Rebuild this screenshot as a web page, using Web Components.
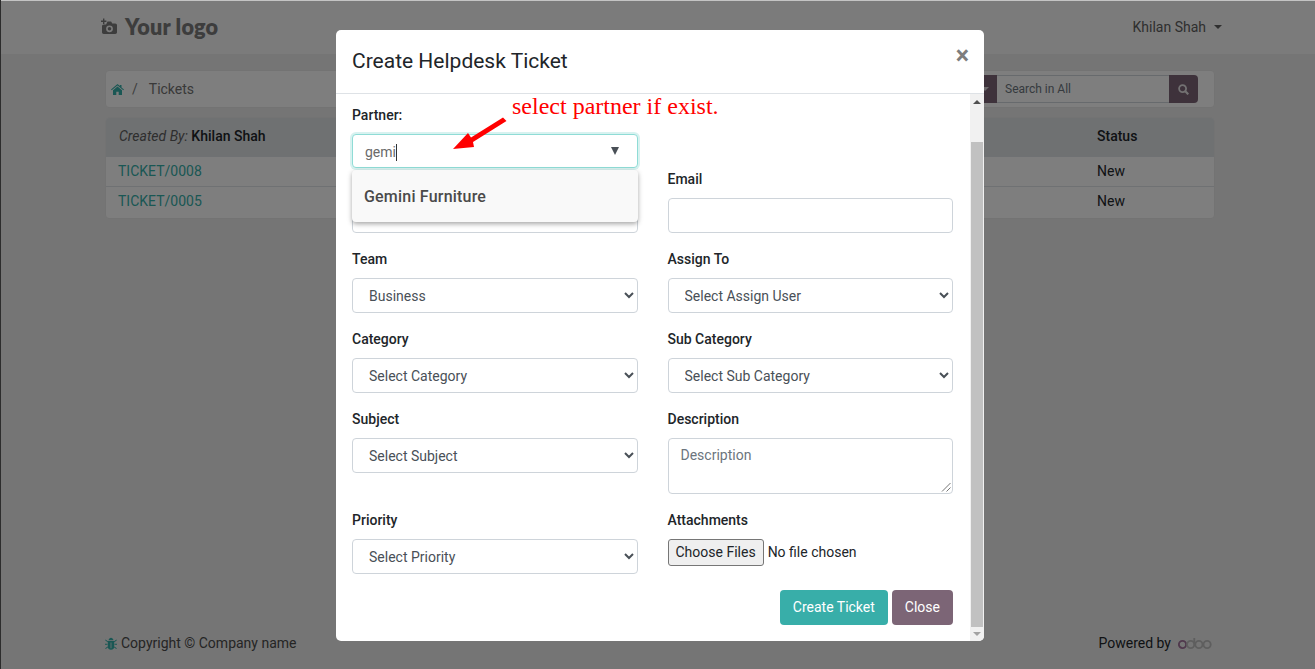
<!DOCTYPE html>
<html>
<head>
<meta charset="utf-8">
<title>Create Helpdesk Ticket</title>
<style>
  html, body { margin: 0; height: 100%; overflow: hidden; }
  body { font: 14px/21px Roboto, "Liberation Sans", sans-serif; color: #212529; background: #ebebeb; }
</style>
</head>
<body>
<portal-page>
  <portal-nav slot="nav">Khilan Shah</portal-nav>
  <portal-crumbs slot="main"></portal-crumbs>
  <ticket-table slot="main"></ticket-table>
  <portal-footer slot="footer"></portal-footer>
  <ticket-modal slot="modal" heading="Create Helpdesk Ticket">
    <form-field>
      <span slot="label">Partner:</span>
      <partner-select value="gemi"></partner-select>
    </form-field>
    <form-field></form-field>
    <form-field empty><form-input></form-input></form-field>
    <form-field>
      <span slot="label">Email</span>
      <form-input></form-input>
    </form-field>
    <form-field>
      <span slot="label">Team</span>
      <form-select text="Business"></form-select>
    </form-field>
    <form-field>
      <span slot="label">Assign To</span>
      <form-select text="Select Assign User"></form-select>
    </form-field>
    <form-field>
      <span slot="label">Category</span>
      <form-select text="Select Category"></form-select>
    </form-field>
    <form-field>
      <span slot="label">Sub Category</span>
      <form-select text="Select Sub Category"></form-select>
    </form-field>
    <form-field>
      <span slot="label">Subject</span>
      <form-select text="Select Subject"></form-select>
    </form-field>
    <form-field>
      <span slot="label">Description</span>
      <form-input multiline placeholder="Description"></form-input>
    </form-field>
    <form-field>
      <span slot="label">Priority</span>
      <form-select text="Select Priority"></form-select>
    </form-field>
    <form-field>
      <span slot="label">Attachments</span>
      <file-picker></file-picker>
    </form-field>
  </ticket-modal>
</portal-page>

<script>
const CAMERA_ICON = `<svg width="18" height="18" viewBox="0 0 18 18" fill="#7a7a7a">
  <path d="M1 2.500h2V.5h1.400v2h2v1.400h-2v2H3v-2H1z"/>
  <path fill-rule="evenodd" d="M7.500 3.500h3.600l1.200 2h3c.9 0 1.700.8 1.700 1.700v7.100c0 .9-.8 1.700-1.700 1.700H3.700c-.9 0-1.700-.8-1.700-1.700V8.200c0-.9.8-1.700 1.700-1.700h2.400zM9.500 7.400a3.400 3.400 0 1 0 0 6.800 3.400 3.400 0 0 0 0-6.800zm0 1.600a1.800 1.800 0 1 1 0 3.600 1.800 1.800 0 0 1 0-3.600z"/>
</svg>`;
const HOME_ICON = `<svg width="13" height="11" viewBox="0 0 13 11" fill="#35aea8">
  <path d="M6.500 0 8.900 2V.9h1.600v2.500L13 5.500l-.7.8-5.800-4.800L.7 6.300 0 5.500z"/>
  <path d="M6.500 2.600 11 6.300V11H7.700V7.700H5.300V11H2V6.300z"/>
</svg>`;
const SEARCH_ICON = `<svg width="11" height="11" viewBox="0 0 11 11" fill="none" stroke="#e6e3e5" stroke-width="1.800">
  <circle cx="4.600" cy="4.600" r="3.500"/><path d="m7.300 7.300 3 3" stroke-width="2.200"/>
</svg>`;
const BUG_ICON = `<svg width="12" height="13" viewBox="0 0 12 13" fill="#35aea8">
  <path d="M3.500 3.300C3.800 1.700 4.800.8 6 .8s2.200.9 2.500 2.500z"/>
  <path fill-rule="evenodd" d="M2.800 4h6.400v6c0 1.600-1.300 2.700-3.200 2.700S2.800 11.600 2.800 10zm2.800 1.500v5.800h.8V5.500z"/>
  <path d="M0 6.800h2.500v1H0zM9.500 6.800H12v1H9.500zM.6 2.600l2.500 2-.5.6-2.500-2zM11.400 2.600l-2.500 2 .5.6 2.500-2zM.2 11.200l2.400-1.700.5.700-2.400 1.700zM11.800 11.200 9.400 9.500l-.5.700 2.400 1.700z"/>
</svg>`;
const ODOO_LOGO = `<svg width="34" height="13" viewBox="0 0 34 13" fill="none" stroke="#bdbdbd" stroke-width="1.900">
  <circle cx="4.500" cy="7.500" r="3.600" stroke="#a0729a"/>
  <circle cx="12.700" cy="7.500" r="3.600"/><path d="M16.300 7.500V1"/>
  <circle cx="20.900" cy="7.500" r="3.600"/><circle cx="29.100" cy="7.500" r="3.600"/>
</svg>`;

class BaseElement extends HTMLElement {
  constructor() {
    super();
    this.attachShadow({ mode: "open" });
  }

  connectedCallback() {
    this.shadowRoot.innerHTML = this.render();
  }
}

class PortalPage extends BaseElement {
  render() {
    return /* html */`
    <style>
      :host { display: block; position: relative; height: 669px; overflow: hidden; }
      .page { display: flex; flex-direction: column; height: 100%; }
      main { flex: 1; display: flex; flex-direction: column; gap: 9px; padding: 16px 100px 0 105px; }
      .backdrop { position: absolute; inset: 0; background: rgba(0, 0, 0, .5); }
      .edge-top { position: absolute; left: 0; right: 0; top: 0; height: 1px; background: #c4c4c4; }
      .edge-left { position: absolute; left: 0; top: 0; bottom: 0; width: 1px; background: #2c2c2c; }
    </style>
    <div class="page">
      <slot name="nav"></slot>
      <main><slot name="main"></slot></main>
      <slot name="footer"></slot>
    </div>
    <div class="backdrop"></div>
    <div class="edge-top"></div>
    <div class="edge-left"></div>
    <slot name="modal"></slot>
    `;
  }
}

class PortalNav extends BaseElement {
  render() {
    return /* html */`
    <style>
      :host { display: flex; align-items: center; justify-content: space-between; height: 54px; padding: 0 93px 0 100px; background: #f6f6f6; flex: none; }
      .logo { display: flex; align-items: center; gap: 7px; font: 800 21.6px/28px Lato, sans-serif; color: #7a7a7a; letter-spacing: .2px; margin-top: -1px; }
      .user { color: #5e5e5e; }
      .user::after { content: ""; display: inline-block; margin-left: 8px; vertical-align: 3px; border-top: 4px solid #5e5e5e; border-left: 4px solid transparent; border-right: 4px solid transparent; }
    </style>
    <div class="logo">${CAMERA_ICON}<span>Your logo</span></div>
    <div class="user"><slot></slot></div>
    `;
  }
}

class PortalCrumbs extends BaseElement {
  render() {
    return /* html */`
    <style>
      :host { display: flex; align-items: center; justify-content: space-between; height: 38px; box-sizing: border-box; padding: 0 16px 0 5px; background: #fdfdfd; border: 1px solid #e6e6e6; border-radius: 4px; }
      .trail { display: flex; align-items: center; color: #7d7d7d; }
      .trail span { margin: 0 11px 0 8px; }
      .current { color: #727272; }
      .search { display: flex; height: 28px; font-size: 12px; }
      .filter { position: relative; width: 30px; background: #7c6576; border-radius: 4px 0 0 4px; }
      .filter::after { content: ""; position: absolute; right: 8px; top: 12px; border-top: 4px solid #dcd6da; border-left: 4px solid transparent; border-right: 4px solid transparent; }
      .input { width: 164px; padding-left: 8px; border: 1px solid #ced4da; border-width: 1px 0; color: #6c757d; line-height: 26px; background: #fdfdfd; }
      .go { display: flex; align-items: center; justify-content: center; width: 29px; background: #7c6576; border-radius: 0 4px 4px 0; }
    </style>
    <div class="trail">${HOME_ICON}<span>/</span><div class="current">Tickets</div></div>
    <div class="search">
      <div class="filter"></div>
      <div class="input">Search in All</div>
      <div class="go">${SEARCH_ICON}</div>
    </div>
    `;
  }
}

class TicketTable extends BaseElement {
  render() {
    const rows = ["TICKET/0008", "TICKET/0005"].map((name) => /* html */`
      <div class="row"><a>${name}</a><span>New</span></div>
    `).join("");
    return /* html */`
    <style>
      :host { display: block; padding-bottom: 2px; background: #fdfdfd; border: 1px solid #e6e6e6; border-radius: 4px; overflow: hidden; }
      .row { display: grid; grid-template-columns: 979px 1fr; align-items: center; height: 29px; padding-left: 12px; border-top: 1px solid #dee2e6; }
      .head { display: grid; grid-template-columns: 978px 1fr; align-items: center; height: 36px; padding: 0 0 2px 13px; background: #dfe2e5; font-weight: 500; color: #212529; }
      em { color: #5c5c5c; font-weight: 400; }
      a { color: #35aea8; }
      span { color: #212529; }
    </style>
    <div class="head"><div><em>Created By:</em> Khilan Shah</div><div>Status</div></div>
    ${rows}
    `;
  }
}

class PortalFooter extends BaseElement {
  render() {
    return /* html */`
    <style>
      :host { display: flex; align-items: center; justify-content: space-between; height: 53px; padding: 2px 103px 0 105px; flex: none; color: #4a4a4a; box-sizing: border-box; }
      .left { display: flex; align-items: center; gap: 4px; }
      .right { display: flex; align-items: center; gap: 7px; color: #212529; }
    </style>
    <div class="left">${BUG_ICON}<span>Copyright © Company name</span></div>
    <div class="right"><span>Powered by</span>${ODOO_LOGO}</div>
    `;
  }
}

class TicketModal extends BaseElement {
  render() {
    return /* html */`
    <style>
      :host { position: absolute; left: 336px; top: 30px; width: 648px; height: 611px; display: flex; flex-direction: column; background: #fff; border-radius: 5px; overflow: hidden; }
      header { display: flex; justify-content: space-between; height: 63px; flex: none; padding: 0 15px 0 16px; border-bottom: 1px solid #dee2e6; }
      h2 { margin: 16px 0 0; font: 400 21px/30px Roboto, sans-serif; color: #212529; }
      .close { font: 700 25px/26px Roboto, sans-serif; color: #7e7e7e; margin-top: 13px; }
      .content { flex: 1; display: flex; min-height: 0; }
      .body { flex: 1; position: relative; padding: 11px 16px 16px; }
      .grid { display: grid; grid-template-columns: 285.5px 285.5px; column-gap: 30px; }
      .actions { display: flex; justify-content: flex-end; gap: 4px; padding-right: 1px; }
      button { height: 35px; padding: 0 13px 2px; border: 0; border-radius: 4px; color: #fff; font: 14px Roboto, sans-serif; }
      .primary { background: #38aea9; }
      .secondary { background: #7c6576; }
      .bar { flex: none; width: 14px; display: flex; flex-direction: column; align-items: center; background: #f1f1f1; }
      .up, .down { flex: none; height: 17px; display: flex; justify-content: center; align-items: center; }
      .up { height: 48px; align-items: flex-start; padding-top: 6px; box-sizing: border-box; }
      .up::before { content: ""; border: 4px solid transparent; border-top: 0; border-bottom: 4px solid #505050; }
      .down { height: 14px; }
      .down::before { content: ""; border: 4px solid transparent; border-bottom: 0; border-top: 4px solid #a3a3a3; }
      .thumb { flex: 1; width: 12px; background: #c1c1c1; margin-right: 1px; }
      .note { position: absolute; z-index: 2; left: 176px; top: -3px; font: 24px/30px "Liberation Serif", serif; color: #f00; white-space: nowrap; }
      .arrow { position: absolute; z-index: 2; left: 116px; top: 22px; }
    </style>
    <header>
      <h2>${this.getAttribute("heading")}</h2>
      <div class="close">×</div>
    </header>
    <div class="content">
      <div class="body">
        <div class="grid"><slot></slot></div>
        <div class="actions">
          <button class="primary">Create Ticket</button>
          <button class="secondary">Close</button>
        </div>
        <div class="note">select partner if exist.</div>
        <svg class="arrow" width="56" height="36" viewBox="0 0 56 36">
          <path d="M1 33 16 17 19 21.500 51 1.500 54.500 5 21 26 22 31z" fill="#f00"/>
        </svg>
      </div>
      <div class="bar"><div class="up"></div><div class="thumb"></div><div class="down"></div></div>
    </div>
    `;
  }
}

class FormField extends BaseElement {
  render() {
    return /* html */`
    <style>
      :host { display: block; padding-bottom: 16px; min-width: 0; }
      .label { display: block; height: 21px; margin-bottom: 8px; font-weight: 500; color: #212529; }
    </style>
    <div class="label"><slot name="label"></slot></div>
    <slot></slot>
    `;
  }

  connectedCallback() {
    super.connectedCallback();
    // first row has almost no gap under it, the next labels sit right below the controls
    if (this.querySelector("partner-select") || !this.children.length) {
      this.style.paddingBottom = "1px";
    }
  }
}

class FormSelect extends BaseElement {
  render() {
    return /* html */`
    <style>
      :host { display: block; }
      select { display: block; width: 100%; height: 35px; box-sizing: border-box; padding: 0 12px; background: #fff; border: 1px solid #ced4da; border-radius: 4px; color: #495057; font: 14px Roboto, sans-serif; }
    </style>
    <select><option>${this.getAttribute("text")}</option></select>
    `;
  }
}

class FormInput extends BaseElement {
  render() {
    const multi = this.hasAttribute("multiline");
    const placeholder = this.getAttribute("placeholder") || "";
    return /* html */`
    <style>
      :host { display: block; }
      .box { position: relative; height: ${multi ? 56 : 35}px; box-sizing: border-box; padding: 6px 12px; border: 1px solid #ced4da; border-radius: 4px; background: #fff; color: #6c757d; }
      svg { position: absolute; right: 1px; bottom: 1px; }
    </style>
    <div class="box">${placeholder}${multi ? `<svg width="10" height="10" viewBox="0 0 10 10" stroke="#777" fill="none"><path d="M9.500 1 1 9.500M9.500 5.500 5.500 9.500"/></svg>` : ""}</div>
    `;
  }
}

class PartnerSelect extends BaseElement {
  render() {
    return /* html */`
    <style>
      :host { display: block; position: relative; z-index: 1; }
      .box { display: flex; align-items: center; justify-content: space-between; height: 34px; box-sizing: border-box; padding: 2px 18px 0 12px; background: #fff; border: 1px solid #8fdcd6; border-radius: 4px; box-shadow: 0 0 0 2px #d8f2f0; color: #6a6a6a; }
      .value { display: flex; align-items: center; }
      .value::after { content: ""; width: 1px; height: 17px; background: #333; }
      .tri { margin-top: -2px; border: 4.500px solid transparent; border-bottom: 0; border-top: 8px solid #495057; }
      .menu { position: absolute; left: 0; right: 0; top: 36px; height: 52px; display: flex; align-items: center; padding: 0 0 0 12px; box-sizing: border-box; background: #f9f9f9; border-radius: 4px; box-shadow: 0 2px 5px rgba(0, 0, 0, .35); font: 500 16px Roboto, sans-serif; letter-spacing: .2px; color: #4a4a4a; }
    </style>
    <div class="box"><span class="value">${this.getAttribute("value")}</span><span class="tri"></span></div>
    <div class="menu">Gemini Furniture</div>
    `;
  }
}

class FilePicker extends BaseElement {
  render() {
    return /* html */`
    <style>
      :host { display: flex; align-items: center; gap: 4px; height: 27px; color: #212529; }
      button { height: 27px; padding: 0 7px 2px; background: #efefef; border: 1px solid #767676; border-radius: 3px; font: 14px Roboto, sans-serif; color: #212529; }
    </style>
    <button>Choose Files</button><span>No file chosen</span>
    `;
  }
}

customElements.define("portal-page", PortalPage);
customElements.define("portal-nav", PortalNav);
customElements.define("portal-crumbs", PortalCrumbs);
customElements.define("ticket-table", TicketTable);
customElements.define("portal-footer", PortalFooter);
customElements.define("ticket-modal", TicketModal);
customElements.define("form-field", FormField);
customElements.define("form-select", FormSelect);
customElements.define("form-input", FormInput);
customElements.define("partner-select", PartnerSelect);
customElements.define("file-picker", FilePicker);
</script>
</body>
</html>
